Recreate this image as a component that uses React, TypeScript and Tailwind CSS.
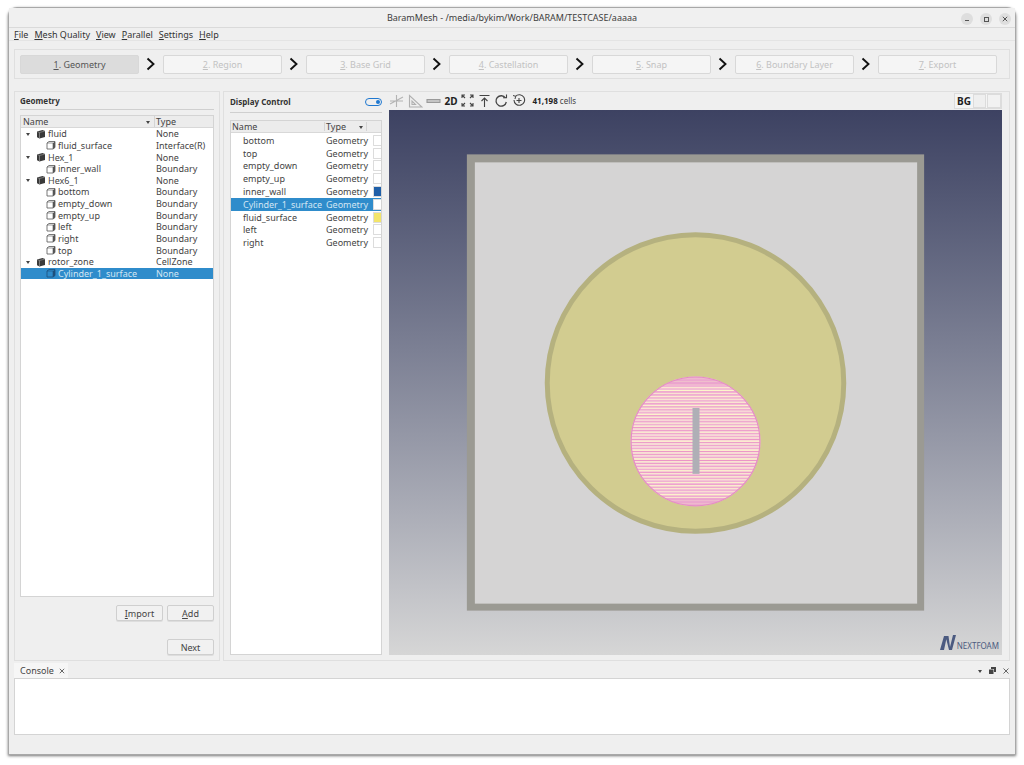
import React from "react";

const FONT = "font-['Noto_Sans',sans-serif]";

const steps = [
  { n: "1", label: ". Geometry", on: true },
  { n: "2", label: ". Region" },
  { n: "3", label: ". Base Grid" },
  { n: "4", label: ". Castellation" },
  { n: "5", label: ". Snap" },
  { n: "6", label: ". Boundary Layer" },
  { n: "7", label: ". Export" },
];

const menus = [
  ["F", "ile"],
  ["M", "esh Quality"],
  ["V", "iew"],
  ["P", "arallel"],
  ["S", "ettings"],
  ["H", "elp"],
];

const tree = [
  { name: "fluid", type: "None", top: true },
  { name: "fluid_surface", type: "Interface(R)" },
  { name: "Hex_1", type: "None", top: true },
  { name: "inner_wall", type: "Boundary" },
  { name: "Hex6_1", type: "None", top: true },
  { name: "bottom", type: "Boundary" },
  { name: "empty_down", type: "Boundary" },
  { name: "empty_up", type: "Boundary" },
  { name: "left", type: "Boundary" },
  { name: "right", type: "Boundary" },
  { name: "top", type: "Boundary" },
  { name: "rotor_zone", type: "CellZone", top: true },
  { name: "Cylinder_1_surface", type: "None", selected: true },
];

const displayRows = [
  { name: "bottom" },
  { name: "top" },
  { name: "empty_down" },
  { name: "empty_up" },
  { name: "inner_wall", swatch: "bg-[#1f5fa8]" },
  { name: "Cylinder_1_surface", selected: true },
  { name: "fluid_surface", swatch: "bg-[#f3e56a]" },
  { name: "left" },
  { name: "right" },
];

// stripes of the sliced cylinder surface
const stripes = Array.from({ length: 44 }, (_, i) => ({
  y: 378 + i * 2.98,
  w: i % 3 === 0 ? 1.5 : i % 3 === 1 ? 1.1 : 0.8,
  o: 0.45 + ((i * 37) % 50) / 100,
}));

function SolidCube() {
  return (
    <svg width="10" height="10" viewBox="0 0 10 10" className="shrink-0">
      <path d="M1 2.5 6.5 1 9 2v6L3.5 9.5 1 8.2z" fill="#3a3a3a" />
      <path d="M3.5 3.5V9.5" stroke="#9a9a9a" strokeWidth="0.7" />
      <path d="M1 2.5 3.5 3.5 9 2" stroke="#9a9a9a" strokeWidth="0.6" fill="none" />
    </svg>
  );
}

function OutlineCube({ selected }: { selected?: boolean }) {
  const c = selected ? "#1d4f7c" : "#555";
  return (
    <svg width="10" height="10" viewBox="0 0 10 10" className="shrink-0">
      <path d="M1 3 3 1.5h6v6L7 9H1z" fill="none" stroke={c} strokeWidth="0.8" />
      <path d="M1 3h6v6" fill="none" stroke={c} strokeWidth="0.6" />
      <path d="M7 3 9 1.5V7.500L7 9z" fill={c} />
    </svg>
  );
}

function Caret() {
  return <span className="mt-px h-0 w-0 border-x-[2.500px] border-t-[3px] border-x-transparent border-t-[#444]" />;
}

function Chevron() {
  return (
    <svg width="10" height="14" viewBox="0 0 10 14" className="shrink-0">
      <path d="M1.500 1.500 7.500 7l-6 5.500" fill="none" stroke="#111" strokeWidth="1.900" />
    </svg>
  );
}

function TreePanel() {
  return (
    <div className="flex h-[482px] flex-col border border-[#d4d4d4] bg-white">
      <div className="flex h-[12px] shrink-0 items-center border-b border-[#d8d8d8] bg-[#ececec] text-[#444]">
        <div className="flex h-full w-[134px] items-center justify-between border-r border-[#d4d4d4] pl-[2px] pr-[4px]">
          <span>Name</span>
          <Caret />
        </div>
        <span className="pl-[1px]">Type</span>
      </div>
      {tree.map((row) => (
        <div
          key={row.name}
          className={`flex h-[11.630px] shrink-0 items-center ${row.selected ? "bg-[#2f8ccb] text-[#d3e6f3]" : "text-[#444]"}`}
        >
          <div className={`flex w-[135px] items-center ${row.top ? "pl-[4px]" : "pl-[25px]"}`}>
            {row.top && (
              <span className="mr-[6px] flex w-[5px] justify-center">
                <Caret />
              </span>
            )}
            {row.top ? <SolidCube /> : <OutlineCube selected={row.selected} />}
            <span className="ml-[2px]">{row.name}</span>
          </div>
          <span>{row.type}</span>
        </div>
      ))}
    </div>
  );
}

function DisplayPanel() {
  return (
    <div className="flex h-[535px] flex-col border border-[#d4d4d4] bg-white">
      <div className="flex h-[12px] shrink-0 items-center border-b border-[#d8d8d8] bg-[#ececec] text-[#444]">
        <span className="w-[94px] border-r border-[#d4d4d4] pl-[1px]">Name</span>
        <div className="flex w-[42px] items-center justify-between border-r border-[#d4d4d4] pl-[1px] pr-[3px]">
          <span>Type</span>
          <Caret />
        </div>
      </div>
      <div className="pt-[1px]">
        {displayRows.map((row) => (
          <div
            key={row.name}
            className={`flex h-[12.800px] items-center ${row.selected ? "bg-[#2f8ccb] text-[#d3e6f3]" : "text-[#444]"}`}
          >
            <span className="w-[95px] pl-[12px]">{row.name}</span>
            <span className="w-[47px]">Geometry</span>
            <span className={`h-[11px] w-[8px] rounded-l-[1px] border border-r-0 border-[#dcdcdc] ${row.swatch ?? "bg-white"}`} />
          </div>
        ))}
      </div>
    </div>
  );
}

function ToolIcon({ children, w = 16 }: { children: React.ReactNode; w?: number }) {
  return (
    <svg width={w} height="14" viewBox={`0 0 ${w} 14`} fill="none" stroke="#444" strokeWidth="1.100" className="shrink-0">
      {children}
    </svg>
  );
}

function Toolbar() {
  return (
    <div className="flex h-[18px] items-center">
      <div className="flex items-center gap-[3.500px]">
        <ToolIcon w={15}>
          <path d="M1 10 14 3M7.500 1v12M1 7h13" stroke="#b4b4b4" />
        </ToolIcon>
        <ToolIcon w={15}>
          <path d="M1.500 1.500V13H14zM4 7v3.500h3.500z" stroke="#b0b0b0" />
        </ToolIcon>
        <ToolIcon w={15}>
          <path d="M1 5.500h13v3H1z" stroke="#9a9a9a" fill="#c4c4c4" />
        </ToolIcon>
        <span className="text-[10px] font-bold text-[#222]">2D</span>
        <ToolIcon w={13}>
          <path d="M1 4V1h3M9 1h3v3M1 9v3h3M12 9v3H9M1 1l3 3M12 1 9 4M1 12l3-3M12 12 9 9" />
        </ToolIcon>
        <ToolIcon w={13}>
          <path d="M1.500 1.500h10M6.500 13V4.500M3.500 7l3-3 3 3" />
        </ToolIcon>
        <ToolIcon w={14}>
          <path d="M11.500 4A5.200 5.200 0 1 0 12.300 8" strokeWidth="1.300" />
          <path d="M9 3.800h3.500V.5" strokeWidth="1.100" />
        </ToolIcon>
        <ToolIcon w={14}>
          <path d="M3.500 2.300A5.300 5.300 0 1 1 2 6" strokeWidth="1.100" />
          <path d="M7 4v5M4.500 6.500h5" strokeWidth="1.100" />
          <path d="M1 1.500 3.700 2.300 3 5" strokeWidth="1" />
        </ToolIcon>
      </div>
      <span className="ml-[7px] text-[8px] text-[#444]">
        <b className="text-[#222]">41,198</b> cells
      </span>
      <div className="ml-auto flex h-[16px] items-center gap-px border border-[#dcdcdc] bg-[#f4f4f4] pl-[2px]">
        <span className="mr-[1px] text-[10px] font-bold leading-none text-[#222]">BG</span>
        <span className="h-[14px] w-[13px] border border-[#dcdcdc] bg-[#efefef]" />
        <span className="h-[14px] w-[14px] border border-[#dcdcdc] bg-[#f2f2f2]" />
      </div>
    </div>
  );
}

function Scene() {
  return (
    <svg viewBox="389 110 614 545" className="absolute inset-0 h-full w-full">
      <defs>
        <clipPath id="rotor">
          <circle cx="696" cy="441.500" r="64.500" />
        </clipPath>
      </defs>
      <rect x="467" y="154" width="458" height="457" fill="#9b9a93" />
      <rect x="475" y="162" width="443" height="442" fill="#d5d4d4" />
      <circle cx="696" cy="383" r="148.500" fill="#d2cc90" stroke="#b5b17f" strokeWidth="5" />
      <circle cx="696" cy="441.500" r="65" fill="#f5cbdc" />
      <g clipPath="url(#rotor)">
        {stripes.map((s) => (
          <rect key={s.y} x="630" y={s.y} width="132" height={s.w} fill="#fdf8c9" opacity={s.o} />
        ))}
        {stripes.map((s) => (
          <rect key={s.y} x="630" y={s.y + 1.600} width="132" height="0.900" fill="#e77dbe" opacity={s.o * 0.9} />
        ))}
        <rect x="630" y="376" width="132" height="9" fill="#e79ccb" opacity="0.6" />
        <rect x="630" y="498" width="132" height="9" fill="#e79ccb" opacity="0.6" />
      </g>
      <circle cx="696" cy="441.500" r="64.500" fill="none" stroke="#e58cc6" strokeWidth="1.200" />
      <rect x="693" y="408" width="7" height="66" fill="#afafb6" />
    </svg>
  );
}

function Button({ u, rest }: { u: string; rest: string }) {
  return (
    <button className="h-[16px] w-[47px] rounded-[2px] border border-[#cfcfcf] bg-[#f1f1f1] text-[#444] shadow-[0_1px_0_#ddd]">
      <span className="underline">{u}</span>
      {rest}
    </button>
  );
}

export default function App() {
  return (
    <div className={`${FONT} h-[765px] w-[1024px] overflow-hidden bg-white pl-[8px] pt-[7px] text-[9px] leading-none`}>
      <div className="flex h-[748px] w-[1008px] flex-col rounded-t-[9px] border border-[#a8a8a8] bg-[#efefef] shadow-[0_1px_3px_rgba(0,0,0,0.55)]">
        <div className="relative flex h-[20px] shrink-0 items-center justify-center border-b border-[#dadada] bg-[#f0f0f0] text-[#3d3d3d]">
          BaramMesh - /media/bykim/Work/BARAM/TESTCASE/aaaaa
          <div className="absolute right-[4px] top-[5px] flex gap-[7px]">
            <span className="flex h-[12px] w-[12px] items-center justify-center rounded-full bg-[#dedede]">
              <span className="mt-[3px] h-px w-[4px] bg-[#555]" />
            </span>
            <span className="flex h-[12px] w-[12px] items-center justify-center rounded-full bg-[#dedede]">
              <span className="h-[5px] w-[5px] border border-[#555]" />
            </span>
            <span className="flex h-[12px] w-[12px] items-center justify-center rounded-full bg-[#dedede]">
              <svg width="6" height="6" viewBox="0 0 6 6">
                <path d="M.8.8l4.400 4.400M5.200.8.800 5.200" stroke="#444" strokeWidth="0.900" />
              </svg>
            </span>
          </div>
        </div>
        <div className="flex h-[13px] shrink-0 items-center gap-[6px] border-b border-[#e4e4e4] pl-[5px] text-[#333]">
          {menus.map(([u, rest]) => (
            <span key={u}>
              <span className="underline">{u}</span>
              {rest}
            </span>
          ))}
        </div>

        <div className="mx-[5px] mt-[8px] flex h-[30px] shrink-0 items-center gap-[7px] border border-[#dfdfdf] pl-[5px] pr-[6px]">
          {steps.map((s, i) => (
            <React.Fragment key={s.n}>
              <div
                className={`flex h-[19px] w-[119px] shrink-0 items-center justify-center rounded-[2px] border border-[#d8d8d8] ${
                  s.on ? "bg-[#dcdcdc] text-[#555]" : "bg-[#f5f5f5] text-[#c2c2c2]"
                }`}
              >
                <span className="underline">{s.n}</span>
                {s.label}
              </div>
              {i < steps.length - 1 && <Chevron />}
            </React.Fragment>
          ))}
        </div>

        <div className="mx-[5px] mt-[12px] flex h-[570px] shrink-0 gap-[3px]">
          <div className="flex w-[206px] shrink-0 flex-col border border-[#dfdfdf] px-[5px]">
            <div className="flex h-[18px] shrink-0 items-end border-b border-[#cfcfcf] pb-[4px] text-[8px] font-bold text-[#333]">
              Geometry
            </div>
            <div className="mt-[5px]">
              <TreePanel />
            </div>
            <div className="mt-[8px] flex justify-end gap-[4px]">
              <Button u="I" rest="mport" />
              <Button u="A" rest="dd" />
            </div>
            <div className="mt-[18px] flex justify-end">
              <Button u="" rest="Next" />
            </div>
          </div>

          <div className="flex min-w-0 flex-1 flex-col border border-[#dfdfdf] pl-[6px] pr-[7px]">
            <div className="flex h-[570px] gap-[7px]">
              <div className="flex w-[152px] shrink-0 flex-col">
                <div className="flex h-[21px] shrink-0 items-end justify-between border-b border-[#cfcfcf] pb-[6px] text-[8px] font-bold text-[#333]">
                  Display Control
                  <span className="flex h-[8px] w-[17px] items-center justify-end rounded-full border-[1.500px] border-[#1f78d0] pr-[1px]">
                    <span className="h-[4px] w-[4px] rounded-full bg-[#1f78d0]" />
                  </span>
                </div>
                <div className="mt-[7px]">
                  <DisplayPanel />
                </div>
              </div>
              <div className="flex min-w-0 flex-1 flex-col">
                <Toolbar />
                <div className="relative h-[545px] bg-gradient-to-b from-[#3d4262] to-[#d6d6d6]">
                  <Scene />
                  <div className="absolute bottom-[5px] right-[3px] flex items-end">
                    <svg width="16" height="15" viewBox="0 0 16 15">
                      <path d="M0 15 4 1h3L4 15zM5.500 1H8.500L10 12 13 0h3l-4 15H9z" fill="#4b5a80" />
                    </svg>
                    <span className="ml-[1px] text-[8px] leading-none text-[#4b5a80]">NEXTFOAM</span>
                  </div>
                </div>
              </div>
            </div>
          </div>
        </div>

        <div className="relative mt-[2px] flex h-[15px] shrink-0 items-center px-[5px]">
          <span className="flex h-[15px] w-[54px] items-center gap-[5px] bg-[#f6f6f6] pl-[6px] text-[#444]">
            Console
            <svg width="6" height="6" viewBox="0 0 6 6">
              <path d="M.8.8l4.400 4.400M5.200.8.800 5.200" stroke="#444" strokeWidth="0.800" />
            </svg>
          </span>
          <div className="ml-auto flex items-center gap-[7px] pr-[1px] text-[#444]">
            <Caret />
            <svg width="7" height="7" viewBox="0 0 7 7">
              <path d="M2 0h5v5H5V2H2zM0 2.500h4.500V7H0z" fill="#444" />
            </svg>
            <svg width="6" height="6" viewBox="0 0 6 6">
              <path d="M.5.5l5 5M5.500.5l-5 5" stroke="#444" strokeWidth="0.800" />
            </svg>
          </div>
        </div>
        <div className="mx-[5px] h-[57px] shrink-0 border border-[#d4d4d4] bg-white" />
      </div>
    </div>
  );
}
